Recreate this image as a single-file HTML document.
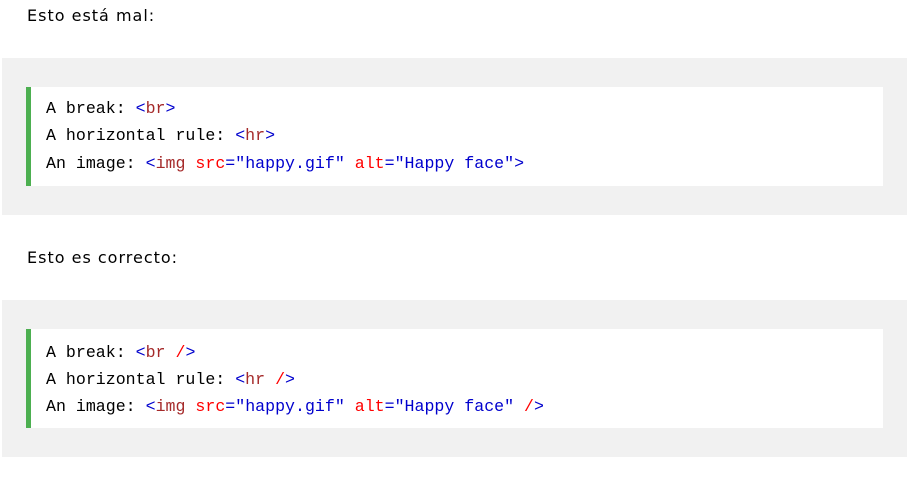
<!DOCTYPE html>
<html><head><style>
body{margin:0;background:#fff;font-family:"DejaVu Sans",sans-serif;font-size:16px;color:#000;width:910px;height:482px;overflow:hidden;position:relative}
.p{position:absolute;left:27px;margin:0;font-size:16px;letter-spacing:1px}
.box{position:absolute;left:2px;width:905px;height:157px;background:#f1f1f1}
.code{position:absolute;left:24px;top:29px;width:852px;height:99px;background:#fff;border-left:5px solid #4caf50;font-family:"Liberation Mono",monospace;font-size:16.6px;}
.code div{position:absolute;left:15px;white-space:pre;line-height:20px}
.t{color:#0000cd}.n{color:#a52a2a}.a{color:#ff0000}
</style></head><body>
<p class="p" style="top:6px">Esto está mal:</p>
<div class="box" style="top:58px"><div class="code">
<div style="top:12px">A break: <span class="t">&lt;</span><span class="n">br</span><span class="t">&gt;</span></div>
<div style="top:39px">A horizontal rule: <span class="t">&lt;</span><span class="n">hr</span><span class="t">&gt;</span></div>
<div style="top:67px">An image: <span class="t">&lt;</span><span class="n">img</span> <span class="a">src</span><span class="t">="happy.gif"</span> <span class="a">alt</span><span class="t">="Happy face"</span><span class="t">&gt;</span></div>
</div></div>
<p class="p" style="top:248px">Esto es correcto:</p>
<div class="box" style="top:300px"><div class="code">
<div style="top:14px">A break: <span class="t">&lt;</span><span class="n">br</span> <span class="a">/</span><span class="t">&gt;</span></div>
<div style="top:41px">A horizontal rule: <span class="t">&lt;</span><span class="n">hr</span> <span class="a">/</span><span class="t">&gt;</span></div>
<div style="top:68px">An image: <span class="t">&lt;</span><span class="n">img</span> <span class="a">src</span><span class="t">="happy.gif"</span> <span class="a">alt</span><span class="t">="Happy face"</span> <span class="a">/</span><span class="t">&gt;</span></div>
</div></div>
</body></html>
